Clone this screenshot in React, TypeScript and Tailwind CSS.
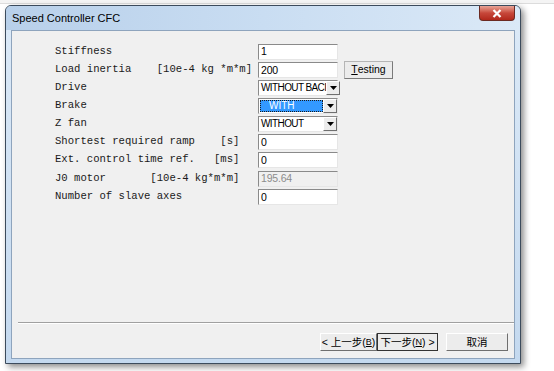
import React from "react";

const mono = { fontFamily: '"Liberation Mono", "Courier New", monospace' };
const sans = { fontFamily: '"Liberation Sans", Arial, sans-serif' };

function Field({ value, disabled }: { value: string; disabled?: boolean }) {
  return (
    <div
      className={`h-[16px] w-[80px] border-t border-l border-t-[#8a8a8a] border-l-[#8a8a8a] border-b border-r border-b-[#e6e6e6] border-r-[#e6e6e6] flex items-center pl-[2px] text-[10.5px] leading-none tracking-[-0.2px] ${
        disabled ? "bg-[#f0f0f0] text-[#8c8c8c]" : "bg-white text-black"
      }`}
      style={sans}
    >
      {value}
    </div>
  );
}

function Arrow() {
  return (
    <div className="h-[14px] w-[14px] shrink-0 bg-[#ececec] border-t border-l border-white border-b border-r border-b-[#6f6f6f] border-r-[#6f6f6f] flex items-center justify-center">
      <svg width="7" height="4" viewBox="0 0 7 4">
        <path d="M0 0 H7 L3.5 4 Z" fill="#000" />
      </svg>
    </div>
  );
}

function Combo({ value, selected }: { value: string; selected?: boolean }) {
  return (
    <div
      className="h-[16px] w-[80px] border-t border-l border-t-[#8a8a8a] border-l-[#8a8a8a] border-b border-r border-b-[#e6e6e6] border-r-[#e6e6e6] bg-white flex items-center text-[10px] leading-none tracking-[-0.6px]"
      style={sans}
    >
      {selected ? (
        <div className="ml-[1px] h-[12px] flex-1 bg-[#3399ff] text-white flex items-center pl-[8px] border border-dotted border-[#1a1a1a] tracking-normal">
          {value}
        </div>
      ) : (
        <div className="flex-1 pl-[2px] whitespace-nowrap">{value}</div>
      )}
      <Arrow />
    </div>
  );
}

const rows: { label: string; ctrl: React.ReactNode; extra?: React.ReactNode; h: number }[] = [
  { label: "Stiffness", ctrl: <Field value="1" />, h: 19 },
  {
    label: "Load inertia    [10e-4 kg *m*m]",
    ctrl: <Field value="200" />,
    extra: (
      <div
        className="ml-[6px] h-[18px] w-[49px] bg-[#ececec] border border-[#b5b5b5] border-b-[#7a7a7a] border-r-[#7a7a7a] flex items-center justify-center text-[10.5px]"
        style={sans}
      >
        <span className="underline">T</span>esting
      </div>
    ),
    h: 18,
  },
  { label: "Drive", ctrl: <Combo value="WITHOUT BACI" />, h: 18 },
  { label: "Brake", ctrl: <Combo value="WITH" selected />, h: 18 },
  { label: "Z fan", ctrl: <Combo value="WITHOUT" />, h: 18 },
  { label: "Shortest required ramp    [s]", ctrl: <Field value="0" />, h: 18 },
  { label: "Ext. control time ref.   [ms]", ctrl: <Field value="0" />, h: 18 },
  { label: "J0 motor       [10e-4 kg*m*m]", ctrl: <Field value="195.64" disabled />, h: 19 },
  { label: "Number of slave axes", ctrl: <Field value="0" />, h: 18 },
];

function Btn({ children, focus, w }: { children: React.ReactNode; focus?: boolean; w: string }) {
  return (
    <div
      className={`${w} h-[18px] flex items-center justify-center whitespace-nowrap text-[10.5px] leading-none bg-[#ececec] ${
        focus
          ? "border border-[#333]"
          : "border border-t-white border-l-white border-b-[#6f6f6f] border-r-[#6f6f6f]"
      }`}
      style={{ fontFamily: '"Liberation Sans", "Noto Sans CJK SC", sans-serif' }}
    >
      {children}
    </div>
  );
}

export default function App() {
  return (
    <div className="relative w-[554px] h-[371px] bg-white overflow-hidden">
      <div className="h-[4px] bg-[#f4f4f4] border-b border-[#dcdcdc]" />
      {/* window */}
      <div className="absolute left-[5px] top-[5px] w-[516px] h-[359px] rounded-t-[6px] border border-[#3c4b5c] bg-[#c6dbf1] shadow-[3px_3px_6px_rgba(0,0,0,0.45)] flex flex-col">
        {/* title bar */}
        <div className="relative h-[24px] flex items-center pl-[6px] rounded-t-[5px] bg-gradient-to-r from-[#b8d0ea] via-[#c9ddf2] to-[#dbe9f7]">
          <span
            className="text-[11px] text-black"
            style={{ fontFamily: '"Liberation Sans", Arial, sans-serif' }}
          >
            Speed Controller CFC
          </span>
          <div className="absolute right-[5px] top-0 w-[36px] h-[15px] rounded-b-[4px] border border-[#6b2a22] border-t-0 bg-gradient-to-b from-[#e8a497] via-[#c7473a] to-[#b1271a] flex items-center justify-center">
            <svg width="10" height="9" viewBox="0 0 10 9">
              <path d="M1.5 1 L8.5 8 M8.5 1 L1.5 8" stroke="#fff" strokeWidth="2.2" />
            </svg>
          </div>
        </div>
        {/* client frame */}
        <div className="flex-1 px-[5px] pb-[4px] bg-gradient-to-b from-[#dbe9f7] to-[#c4d9ef]">
          <div className="h-full border border-[#8ea4bd] bg-[#f0f0f0] relative flex flex-col">
            <div className="pt-[11px] pl-[43px] flex flex-col">
              {rows.map((r, i) => (
                <div key={i} className="flex items-center" style={{ height: r.h }}>
                  <div
                    className="w-[203px] whitespace-pre text-[10.6px] text-[#1a1a1a]"
                    style={mono}
                  >
                    {r.label}
                  </div>
                  {r.ctrl}
                  {r.extra}
                </div>
              ))}
            </div>
            <div className="flex-1" />
            <div className="ml-[6px] mr-0 h-[2px] border-t border-[#a0a0a0] border-b border-b-white" />
            <div className="flex pl-[308px] pt-[9px] pb-[7px]">
              <Btn w="w-[57px]">
                &lt; 上一步(<span className="underline text-[9px]">B</span>)
              </Btn>
              <Btn w="w-[61px]" focus>
                下一步(<span className="underline text-[9px]">N</span>) &gt;
              </Btn>
              <div className="w-[8px]" />
              <Btn w="w-[62px]">取消</Btn>
            </div>
          </div>
        </div>
      </div>
    </div>
  );
}
